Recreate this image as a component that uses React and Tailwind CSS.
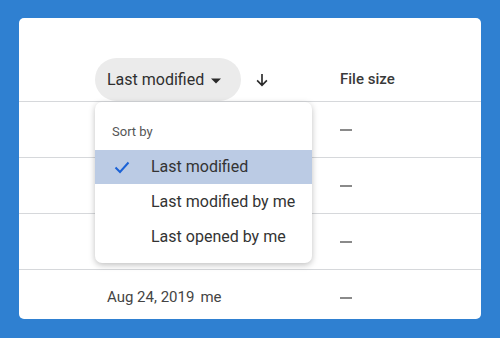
export default function App() {
  const rows = [
    { date: "", dash: true },
    { date: "", dash: true },
    { date: "", dash: true },
    { date: "Aug 24, 2019", owner: "me", dash: true },
  ];
  return (
    <div className="w-[500px] h-[338px] bg-[#2f80d1] pt-[18px] pl-[19px]" style={{ fontFamily: "Roboto, 'Liberation Sans', sans-serif" }}>
      <div className="relative w-[462px] h-[301px] bg-white rounded-[5px] overflow-hidden">
        <div className="h-[84px] border-b border-[#d6d8db] flex items-start pt-[40px]">
          <div className="ml-[76px] h-[43px] w-[146px] rounded-full bg-[#ebebeb] flex items-center pl-[12px] text-[16px] text-[#2f2f2f]">
            <span>Last modified</span>
            <svg width="10" height="6" viewBox="0 0 10 5" className="ml-[7px] mt-[2px]">
              <path d="M0 0 L10 0 L5 5 Z" fill="#2a2a2a" />
            </svg>
          </div>
          <div className="ml-[12px] h-[43px] flex items-center">
            <svg width="18" height="18" viewBox="0 0 24 24">
              <path d="M12 4 V19 M5.5 12.5 L12 19 L18.5 12.5" stroke="#2a2a2a" strokeWidth="2.2" fill="none" />
            </svg>
          </div>
          <div className="ml-[69px] h-[43px] flex items-center text-[15px] text-[#3a3a3a] font-medium">File size</div>
        </div>
        {rows.map((r, i) => (
          <div key={i} className="h-[56px] border-b border-[#d6d8db] flex items-center text-[15px] text-[#444]">
            <div className="w-[321px] pl-[88px] flex gap-[6px]">
              {r.date && <span>{r.date}</span>}
              {r.owner && <span>{r.owner}</span>}
            </div>
            <div className="w-[12px] h-[2px] bg-[#8a8a8a]" />
          </div>
        ))}
        <div className="absolute left-[76px] top-[84px] w-[217px] h-[161px] bg-white rounded-[7px] shadow-[0_2px_6px_rgba(0,0,0,0.25)] pt-[21px]">
          <div className="pl-[17px] text-[13px] text-[#555] h-[18px] leading-[18px]">Sort by</div>
          <div className="mt-[9px] h-[34px] bg-[#bbcbe4] flex items-center text-[16px] text-[#333]">
            <div className="w-[56px] flex pl-[19px]">
              <svg width="16" height="13" viewBox="0 0 16 13">
                <path d="M1.5 6.5 L6 11 L14.5 1.5" stroke="#1b62d6" strokeWidth="2" fill="none" />
              </svg>
            </div>
            <span>Last modified</span>
          </div>
          <div className="h-[35px] flex items-center pl-[56px] text-[16px] text-[#333]">Last modified by me</div>
          <div className="h-[35px] flex items-center pl-[56px] text-[16px] text-[#333]">Last opened by me</div>
        </div>
      </div>
    </div>
  );
}
